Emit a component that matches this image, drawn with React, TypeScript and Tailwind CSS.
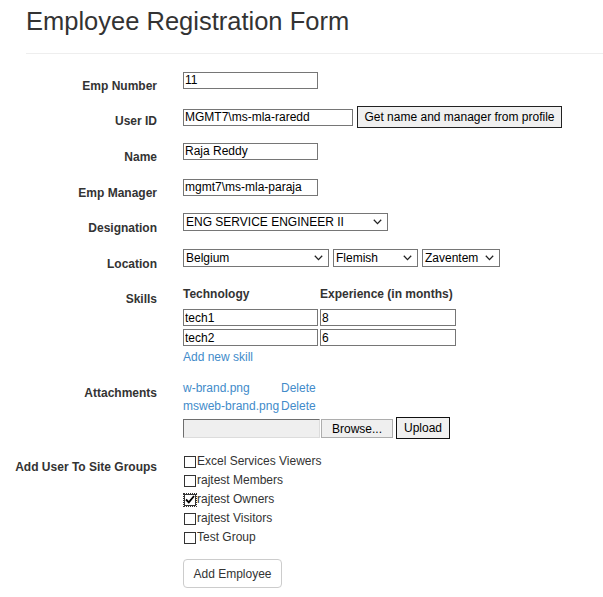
import React from "react";

const inputCls =
  "h-[17px] border border-[#767676] bg-white px-[1px] text-[12px] leading-[15px] text-black outline-none";

function Row({
  label,
  children,
  className = "",
  labelClass = "pt-[7px]",
}: {
  label: string;
  children: React.ReactNode;
  className?: string;
  labelClass?: string;
}) {
  return (
    <div className={"flex items-start " + className}>
      <div
        className={
          "w-[157px] shrink-0 text-right font-bold leading-[17px] text-[#333] " +
          labelClass
        }
      >
        {label}
      </div>
      <div className="ml-[26px]">{children}</div>
    </div>
  );
}

function Select({ value, width }: { value: string; width: string }) {
  return (
    <div
      className={
        "flex h-[18px] items-center justify-between border border-[#767676] bg-white pl-[2px] pr-[5px] text-[12px] text-black " +
        width
      }
    >
      <span className="leading-[16px]">{value}</span>
      <svg width="9" height="6" viewBox="0 0 9 6" fill="none">
        <path d="M0.8 0.8 L4.5 4.6 L8.2 0.8" stroke="#222" strokeWidth="1.3" />
      </svg>
    </div>
  );
}

function Check({ label, checked = false }: { label: string; checked?: boolean }) {
  return (
    <div className="flex h-[19px] items-center">
      <span
        className={
          "ml-[1px] flex h-[12px] w-[12px] items-center justify-center border border-[#333] bg-white " +
          (checked ? "outline outline-1 outline-dotted outline-[#333]" : "")
        }
      >
        {checked && (
          <svg width="10" height="9" viewBox="0 0 10 9" fill="none">
            <path d="M1 4.5 L3.8 7.3 L9 1" stroke="#000" strokeWidth="1.8" />
          </svg>
        )}
      </span>
      <span className="ml-[1px] leading-[17px] text-[#333]">{label}</span>
    </div>
  );
}

export default function App() {
  const groups = [
    "Excel Services Viewers",
    "rajtest Members",
    "rajtest Owners",
    "rajtest Visitors",
    "Test Group",
  ];

  return (
    <div className="min-h-[597px] bg-white font-['Liberation_Sans',Arial,sans-serif] text-[12px] text-[#333]">
      <h1 className="pl-[26px] pt-[6px] text-[25.5px] font-normal leading-[30px] text-[#333]">
        Employee Registration Form
      </h1>
      <div className="ml-[26px] mt-[17px] border-t border-[#eeeeee]" />

      <form className="flex flex-col" onSubmit={(e) => e.preventDefault()}>
        <Row label="Emp Number" className="mt-[17px]">
          <input className={inputCls + " w-[135px]"} defaultValue="11" />
        </Row>

        <Row label="User ID" className="mt-[11px]">
          <div className="flex items-center gap-[4px]">
            <input
              className={inputCls + " w-[170px]"}
              defaultValue="MGMT7\ms-mla-raredd"
            />
            <button
              type="button"
              className="h-[22px] w-[205px] border border-[#222] bg-[#f0f0f0] text-[12px] text-black"
            >
              Get name and manager from profile
            </button>
          </div>
        </Row>

        <Row label="Name" className="mt-[12px]">
          <input className={inputCls + " w-[135px]"} defaultValue="Raja Reddy" />
        </Row>

        <Row label="Emp Manager" className="mt-[12px]">
          <input
            className={inputCls + " w-[135px]"}
            defaultValue="mgmt7\ms-mla-paraja"
          />
        </Row>

        <Row label="Designation" className="mt-[11px]">
          <Select value="ENG SERVICE ENGINEER II" width="w-[205px]" />
        </Row>

        <Row label="Location" className="mt-[12px]">
          <div className="flex gap-[4px]">
            <Select value="Belgium" width="w-[146px]" />
            <Select value="Flemish" width="w-[85px]" />
            <Select value="Zaventem" width="w-[78px]" />
          </div>
        </Row>

        <Row label="Skills" className="mt-[11px]">
          <div className="flex flex-col">
            <div className="flex h-[25px] gap-[2px] pt-[2px] font-bold leading-[17px] text-[#333]">
              <span className="w-[135px]">Technology</span>
              <span>Experience (in months)</span>
            </div>
            <div className="flex gap-[2px]">
              <input className={inputCls + " w-[135px]"} defaultValue="tech1" />
              <input className={inputCls + " w-[136px]"} defaultValue="8" />
            </div>
            <div className="mt-[3px] flex gap-[2px]">
              <input className={inputCls + " w-[135px]"} defaultValue="tech2" />
              <input className={inputCls + " w-[136px]"} defaultValue="6" />
            </div>
            <a className="mt-[3px] leading-[17px] text-[#428bca]">Add new skill</a>
          </div>
        </Row>

        <Row label="Attachments" className="mt-[14px]" labelClass="pt-[5px]">
          <div className="flex flex-col">
            <div className="flex h-[18px] leading-[17px] text-[#428bca]">
              <a className="w-[98px]">w-brand.png</a>
              <a>Delete</a>
            </div>
            <div className="flex h-[18px] leading-[17px] text-[#428bca]">
              <a className="w-[98px]">msweb-brand.png</a>
              <a>Delete</a>
            </div>
            <div className="mt-[1px] flex items-center">
              <div className="h-[19px] w-[137px] border-b border-l border-r border-t border-[#6e6e6e] border-b-[#dcdcdc] border-r-[#dcdcdc] bg-[#efefef]" />
              <button
                type="button"
                className="ml-[1px] h-[19px] w-[72px] border border-[#adadad] bg-[#efefef] text-[12px] text-black"
              >
                Browse...
              </button>
              <button
                type="button"
                className="ml-[3px] h-[22px] w-[54px] border border-[#111] bg-[#f0f0f0] text-[12px] text-black"
              >
                Upload
              </button>
            </div>
          </div>
        </Row>

        <Row label="Add User To Site Groups" className="mt-[13px]" labelClass="pt-[7px]">
          <div className="flex flex-col">
            {groups.map((g) => (
              <Check key={g} label={g} checked={g === "rajtest Owners"} />
            ))}
            <button
              type="button"
              className="mt-[12px] h-[29px] w-[99px] rounded-[4px] border border-[#cccccc] bg-white text-[12px] text-[#333]"
            >
              Add Employee
            </button>
          </div>
        </Row>
      </form>
    </div>
  );
}
